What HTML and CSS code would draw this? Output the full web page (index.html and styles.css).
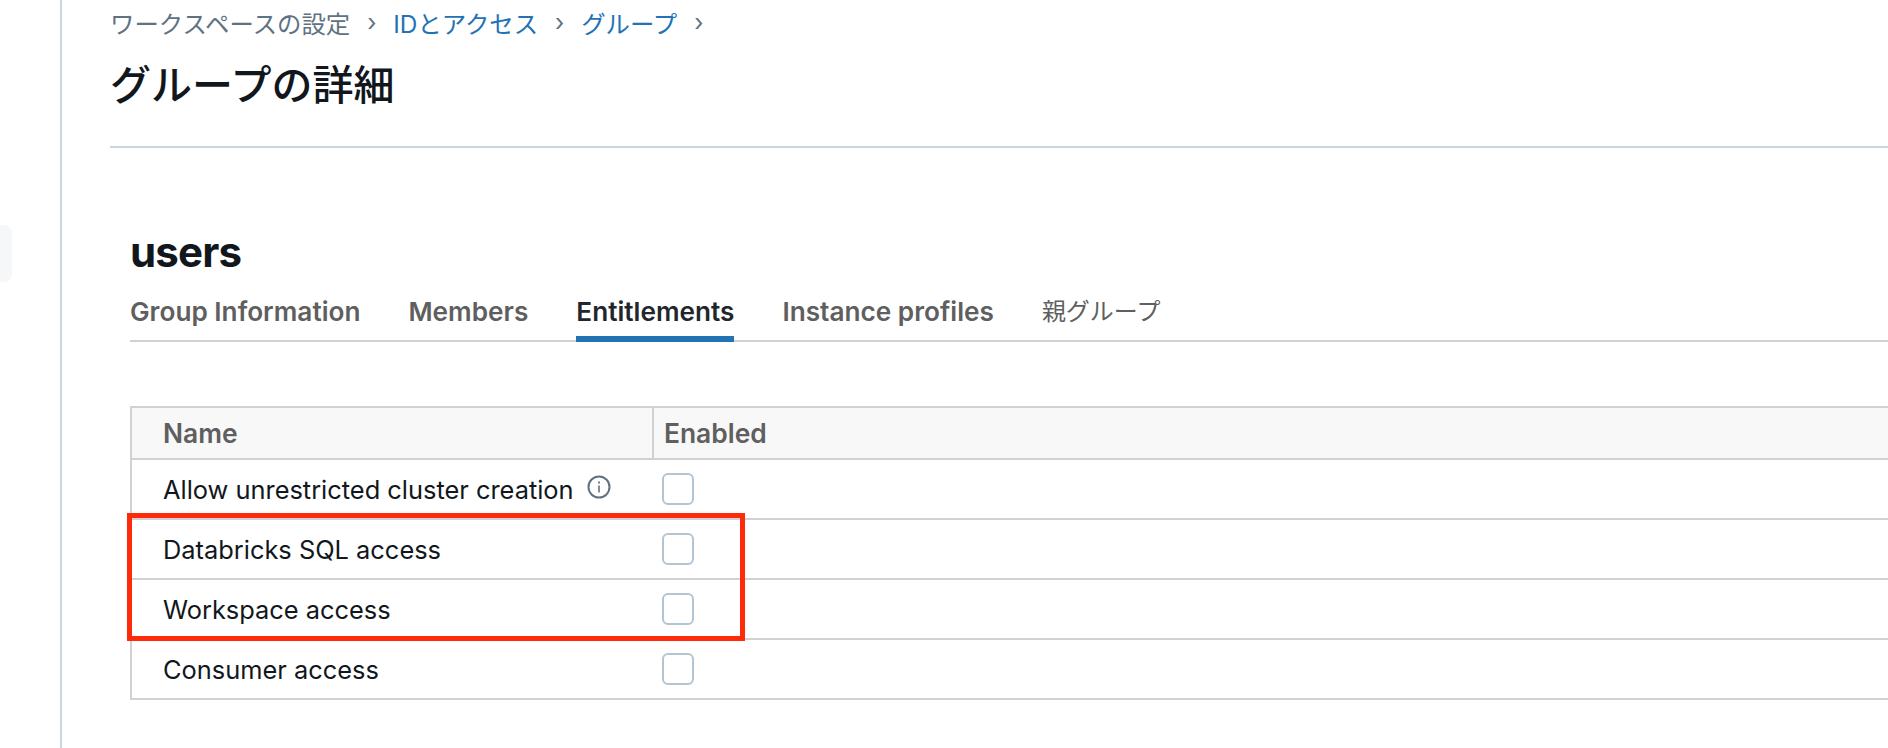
FILE: index.html
```html
<!DOCTYPE html>
<html lang="ja">
<head>
    <meta charset="UTF-8">
    <meta name="viewport" content="width=device-width, initial-scale=1.0">
    <title>グループの詳細</title>
    <link rel="stylesheet" href="styles.css">
</head>
<body>
    <div class="app">
        <!-- サイドバー -->
        <aside class="sidebar">
            <div class="sidebar-item"></div>
        </aside>

        <main class="main">
            <header class="page-header">
                <nav class="breadcrumb">
                    <span class="crumb">ワークスペースの設定</span>
                    <span class="sep">›</span>
                    <a class="crumb link">IDとアクセス</a>
                    <span class="sep">›</span>
                    <a class="crumb link">グループ</a>
                    <span class="sep">›</span>
                </nav>
                <h1 class="page-title">グループの詳細</h1>
            </header>

            <section class="content">
                <h2 class="group-name">users</h2>
                <div class="tabs">
                    <div class="tab">Group Information</div>
                    <div class="tab">Members</div>
                    <div class="tab active">Entitlements</div>
                    <div class="tab">Instance profiles</div>
                    <div class="tab tab-ja">親グループ</div>
                </div>

                <div class="table-wrap">
                    <table class="entitlements">
                        <thead>
                            <tr>
                                <th class="col-name">Name</th>
                                <th class="col-enabled">Enabled</th>
                            </tr>
                        </thead>
                        <tbody>
                            <tr>
                                <td class="col-name">
                                    Allow unrestricted cluster creation
                                    <svg class="info-icon" viewBox="0 0 24 24" fill="none" stroke="#5f7281">
                                        <circle cx="12" cy="12" r="10.5" stroke-width="2"/>
                                        <path d="M12 10.5v7" stroke-width="1.6"/>
                                        <path d="M12 6.5v2" stroke-width="1.8"/>
                                    </svg>
                                </td>
                                <td><input class="check" type="checkbox"></td>
                            </tr>
                            <tr>
                                <td class="col-name">Databricks SQL access</td>
                                <td><input class="check" type="checkbox"></td>
                            </tr>
                            <tr>
                                <td class="col-name">Workspace access</td>
                                <td><input class="check" type="checkbox"></td>
                            </tr>
                            <tr>
                                <td class="col-name">Consumer access</td>
                                <td><input class="check" type="checkbox"></td>
                            </tr>
                        </tbody>
                    </table>
                    <!-- 赤枠の注釈 -->
                    <div class="highlight"></div>
                </div>
            </section>
        </main>
    </div>
</body>
</html>
```

FILE: styles.css
```css
html, body {
    margin: 0;
    height: 100%;
    background-color: #fff;
    overflow: hidden;
}
body {
    font-family: Inter, 'Noto Sans CJK JP', sans-serif;
    color: #11171c;
}
.app {
    display: flex;
    width: 1888px;
    height: 748px;
}

/* サイドバー */
.sidebar {
    width: 60px;
    flex-shrink: 0;
    border-right: 2px solid #cbd5dd;
    padding-top: 225px;
}
.sidebar-item {
    width: 12px;
    height: 57px;
    background-color: #f6f7f8;
    border-radius: 0 8px 8px 0;
}

.main {
    flex: 1;
    min-width: 0;
    padding-left: 48px;
}

/* ヘッダー */
.page-header {
    height: 146px;
    border-bottom: 2px solid #cbd5dd;
}
.breadcrumb {
    display: flex;
    align-items: center;
    height: 44px;
    font-size: 24.4px;
    color: #5f7281;
}
.link {
    color: #2272b4;
}
.sep {
    width: 43px;
    text-align: center;
    font-size: 24px;
}
.page-title {
    margin: 11px 0 0;
    font-size: 41px;
    line-height: 60px;
    font-weight: 500;
}

/* グループ */
.content {
    padding: 80px 0 0 20px;
}
.group-name {
    margin: 0;
    font-size: 42px;
    line-height: 48px;
    font-weight: 700;
    letter-spacing: -0.8px;
}
.tabs {
    display: flex;
    gap: 48px;
    height: 66px;
    box-sizing: border-box;
    border-bottom: 2px solid #d1d1d1;
}
.tab {
    height: 66px;
    box-sizing: border-box;
    font-size: 26.2px;
    line-height: 71px;
    font-weight: 600;
    color: #5f5f5f;
}
.tab-ja {
    font-size: 24px;
    font-weight: 400;
}
.tab.active {
    color: #1f272d;
    border-bottom: 6px solid #2272b4;
}

/* 権限テーブル */
.table-wrap {
    position: relative;
    margin-top: 64px;
}
.entitlements {
    width: 100%;
    table-layout: fixed;
    border-collapse: collapse;
    border-left: 2px solid #d1d1d1;
    border-top: 2px solid #d1d1d1;
    font-size: 25.4px;
}
.entitlements th {
    height: 50px;
    padding: 0;
    text-align: left;
    font-size: 26.4px;
    font-weight: 600;
    color: #5f5f5f;
    background-color: #f8f8f8;
    border-bottom: 2px solid #d1d1d1;
}
.entitlements td {
    height: 58px;
    padding: 0;
    border-bottom: 2px solid #d1d1d1;
}
.entitlements .col-name {
    width: 522px;
    padding-left: 31px;
    box-sizing: border-box;
}
.entitlements th.col-name {
    border-right: 2px solid #d1d1d1;
}
.entitlements .col-enabled {
    padding-left: 10px;
}
.entitlements td:last-child {
    padding-left: 9px;
}
.info-icon {
    width: 24px;
    height: 24px;
    margin-left: 6px;
    vertical-align: 0;
}
.check {
    appearance: none;
    display: block;
    width: 32px;
    height: 32px;
    margin: 0;
    border: 2px solid #b3c4d3;
    border-radius: 6px;
    background-color: #fff;
}
.highlight {
    position: absolute;
    left: -3px;
    top: 107px;
    width: 608px;
    height: 118px;
    border: 5px solid #ff2a0a;
}
```
